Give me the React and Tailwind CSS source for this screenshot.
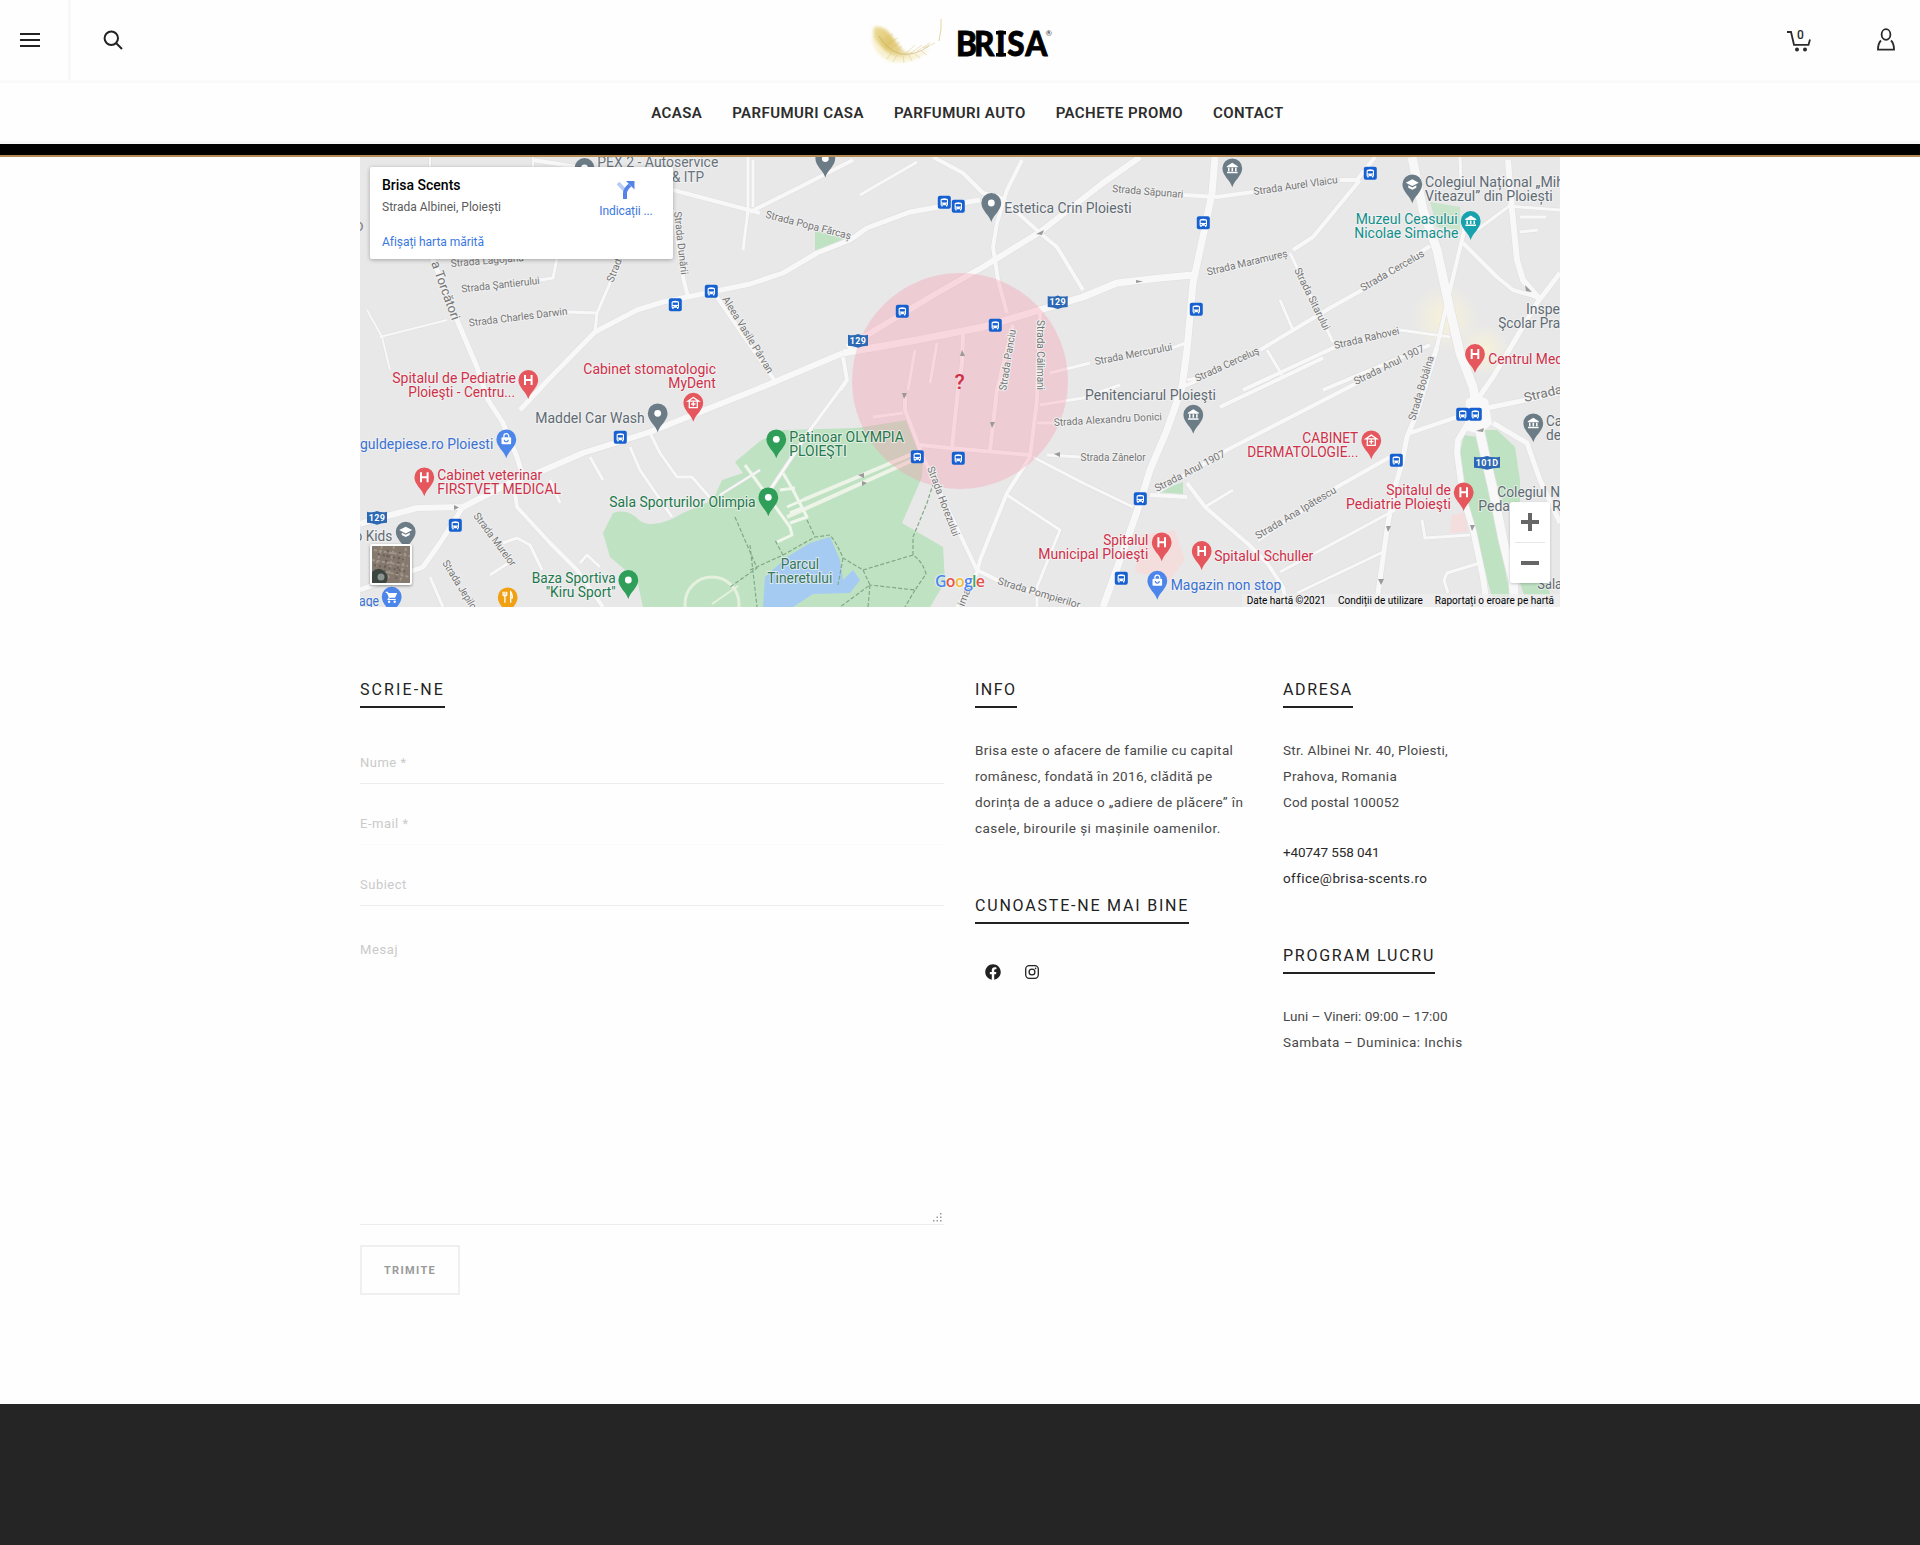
import React from "react";
import { FaFacebook } from "react-icons/fa";

/* ---------- Map data ---------- */

const roads = [
  // [width, path]
  [2, "M367 310L382 337L390 370M380 337L447 320M430 157V170M533 157V170M760 470L720 495"],
  [3, "M557 258L553 278L527 282M617 267L597 313L595 332M597 313L567 312M748 157V210L743 250M860 195L917 162M753 160V207M590 457L603 480M550 480L560 503M650 433L660 453L677 477H692L712 500M630 447L640 470L672 517M503 543L517 538L530 545L542 570M580 563L587 555L600 567M430 577L443 607M490 575L510 562M847 380L810 430L770 490"],
  [3, "M937 343L930 383M915 350L908 390M873 417L903 413M1040 405L1083 398L1120 385M1037 423H1053M1047 455L1080 457M1007 495L1060 530L1037 587V607M1033 457L1083 483L1133 507M1050 373L1090 363M1172 348L1186 343"],
  [3, "M1280 300L1293 330M1267 350L1282 375M1508 206L1560 210M1520 217H1546M1520 232L1538 230M1460 157L1461 183M1477 230L1508 207M1187 380L1196 378M1205 507L1233 490M1280 572L1395 510M1297 593L1383 552M1422 520L1425 538L1470 535M1480 563L1447 573L1444 580L1448 593M1290 253L1333 342M1400 330L1450 337"],
  [4, "M533 160L577 167M673 190L760 213M673 210L683 277L688 297M843 357L847 380L840 390M750 212L800 187L853 160M933 157L963 173L983 193L1000 197M1022 160L1007 190L997 223L993 247L998 280L1007 313M1000 197L1040 233L1057 247L1083 290M717 297L777 384M513 480L517 507L550 543L577 570L603 607"],
  [4, "M963 333L962 363L958 390L952 447M997 390L990 450M1013 325L997 390M1040 313L1037 400L1030 457M905 397V410L923 457M920 445L950 448L1030 455M1030 457L1007 493L980 560L977 573M923 457L977 570L997 580L1080 607M977 573L957 607"],
  [4, "M1183 195L1217 197L1253 192M1340 180L1357 180L1375 157M1360 180L1313 237L1293 250M1260 350L1330 308L1362 290L1430 246M1182 387L1196 381M1243 390L1333 348L1400 330M1323 390L1430 345M1220 407L1277 380L1323 358M1157 492L1227 450L1357 383L1372 376M1258 540L1337 487L1390 457M1410 433L1457 417M1187 483L1205 507L1247 543L1267 563L1283 587L1287 607M1150 495L1187 497M1463 243L1497 277L1513 290L1537 297M1465 227L1450 290L1437 347"],
  [5, "M425 240L457 320L477 367L488 400L503 423L517 457L523 477M463 507L440 543L423 567L360 590M548 380L595 332L637 310L663 302L697 295L750 284L783 273L817 253L850 240L867 228L910 212L950 205L980 200M520 410L548 380M1437 347L1417 413L1407 437L1402 463L1395 487L1388 523L1378 593V607M1560 273L1537 303L1493 377L1477 400M1493 423L1527 443L1540 480L1560 523M1477 410L1560 393"],
  [6, "M360 524L383 517L417 508L463 507L510 483L537 473L583 453L650 432L710 408L760 388L843 353M847 347L937 293L983 267L1040 232L1103 183L1140 157M1508 160L1512 210L1517 260L1523 280L1540 300M1470 420L1458 440L1457 453L1463 497L1473 530L1483 577L1487 607"],
  [7, "M843 353L917 340L983 327L1083 297L1117 283L1160 278L1193 275M1215 157L1212 193L1205 227L1193 283L1187 350L1182 387L1167 430L1150 470L1140 503L1120 560L1103 607"],
  [9, "M1412 157L1423 210L1437 250L1450 310L1460 353L1473 387L1477 410L1480 433L1493 490L1503 540L1513 580L1515 607"],
];

const streets = [
  [451, 267, 524, 261, "Strada Lagojana"],
  [461.7, 292.5, 540, 284, "Strada Şantierului"],
  [469.3, 326.5, 567.7, 314.5, "Strada Charles Darwin"],
  [674, 212, 681, 275, "Strada Dunării"],
  [613, 283, 624, 255, "Strada"],
  [722, 299, 768, 374, "Aleea Vasile Pârvan"],
  [765, 217.5, 850, 239.5, "Strada Popa Fărcaș"],
  [1112, 192, 1183, 198, "Strada Săpunari"],
  [1254, 195, 1338, 183, "Strada Aurel Vlaicu"],
  [1207.7, 275.5, 1288, 256.5, "Strada Maramureș"],
  [1294, 270, 1324, 331, "Strada Sitarului"],
  [1363, 291.5, 1425, 255.5, "Strada Cercelus"],
  [1197, 382, 1260, 353, "Strada Cerceluş"],
  [1335, 349, 1400, 334, "Strada Rahovei"],
  [1356, 385, 1425, 351, "Strada Anul 1907"],
  [1415, 421, 1434, 357, "Strada Bobâlna"],
  [1095.5, 365, 1172.7, 350, "Strada Mercurului"],
  [1006, 391, 1016, 330, "Strada Panciu"],
  [1037, 320, 1037, 390, "Strada Călimani"],
  [1054, 426, 1162, 420, "Strada Alexandru Donici"],
  [1080.5, 461, 1145.7, 461, "Strada Zânelor"],
  [927, 468, 953, 537, "Strada Horezului"],
  [997, 584, 1079, 608.5, "Strada Pompierilor"],
  [964, 607, 973, 585, "imac"],
  [1157, 492, 1226, 456, "Strada Anul 1907"],
  [1258, 539.5, 1337, 492, "Strada Ana Ipătescu"],
  [473, 516, 511, 567, "Strada Murelor"],
  [442, 563, 473, 613, "Strada Jepilor"],
];

const places = [
  // [x1, x2, baseline, text, colour]
  [597.3, 718.3, 167, "PEX 2 - Autoservice", "#69747c"],
  [672, 704, 181.5, "& ITP", "#69747c"],
  [1004.3, 1131.7, 213, "Estetica Crin Ploiesti", "#5f6b73"],
  [1425, 1564, 187, "Colegiul Național „Mih", "#5f6b73"],
  [1425, 1552.7, 201, "Viteazul” din Ploiești", "#5f6b73"],
  [1355.7, 1457.7, 224, "Muzeul Ceasului", "#12908c"],
  [1354.3, 1458.3, 238, "Nicolae Simache", "#12908c"],
  [1526, 1560, 314, "Inspe", "#5f6b73"],
  [1498.3, 1560, 328, "Şcolar Pra", "#5f6b73"],
  [1488.3, 1563, 364, "Centrul Med", "#cf3049"],
  [1085, 1216, 400, "Penitenciarul Ploieşti", "#5f6b73"],
  [583.3, 716, 374, "Cabinet stomatologic", "#cf3049"],
  [668.3, 715.7, 388, "MyDent", "#cf3049"],
  [392.3, 516, 383.3, "Spitalul de Pediatrie", "#cf3049"],
  [408.3, 515, 397.3, "Ploieşti - Centru...", "#cf3049"],
  [535.3, 644.7, 423.3, "Maddel Car Wash", "#5f6b73"],
  [360, 493.3, 449, "guldepiese.ro Ploiesti", "#3a72d4"],
  [437.3, 542.3, 480.3, "Cabinet veterinar", "#cf3049"],
  [437.3, 561, 494, "FIRSTVET MEDICAL", "#cf3049"],
  [609.3, 755.7, 507.3, "Sala Sporturilor Olimpia", "#23794c"],
  [354.5, 392.3, 541, "o Kids", "#5f6b73"],
  [359, 379, 606, "age", "#3a72d4"],
  [531.7, 615.7, 583, "Baza Sportiva", "#23794c"],
  [545.7, 615.7, 597, "\"Kiru Sport\"", "#23794c"],
  [789.3, 904, 442, "Patinoar OLYMPIA", "#23794c"],
  [789.3, 846.7, 456, "PLOIEŞTI", "#23794c"],
  [780.7, 819, 569, "Parcul", "#35775a"],
  [767.3, 832.3, 583, "Tineretului", "#35775a"],
  [1103.3, 1148.3, 545.3, "Spitalul", "#cf3049"],
  [1038.3, 1148.3, 559.3, "Municipal Ploieşti", "#cf3049"],
  [1214.3, 1313.3, 561, "Spitalul Schuller", "#cf3049"],
  [1170.7, 1281.3, 589.7, "Magazin non stop", "#3a72d4"],
  [1302.3, 1358.3, 443, "CABINET", "#cf3049"],
  [1247.3, 1358.3, 457, "DERMATOLOGIE...", "#cf3049"],
  [1386.3, 1451, 495, "Spitalul de", "#cf3049"],
  [1346, 1451, 509, "Pediatrie Ploieşti", "#cf3049"],
  [1497.3, 1560, 497, "Colegiul N", "#5f6b73"],
  [1478.3, 1510, 511, "Peda", "#5f6b73"],
  [1552, 1561, 511, "R", "#5f6b73"],
  [1546, 1562, 426.3, "Ca", "#5f6b73"],
  [1546, 1561, 440.3, "de", "#5f6b73"],
  [1537.3, 1562, 589, "Sala", "#5f6b73"],
];

const GRAY = "#6c7c87";
const RED = "#e5575c";
const BLUE = "#4d86ea";
const GREEN = "#2f9e58";

const pins = [
  [584.5, 168, GRAY, "dot"],
  [825.3, 158.5, GRAY, "dot"],
  [991.3, 203, GRAY, "dot"],
  [1232.3, 168.3, GRAY, "civic"],
  [1412.3, 184.3, GRAY, "school"],
  [1470.7, 221, "#17a2ae", "civic"],
  [1475, 354, RED, "h"],
  [528.3, 380, RED, "h"],
  [693.3, 402.7, RED, "clinic"],
  [657.7, 413.3, GRAY, "dot"],
  [506.3, 439.3, BLUE, "bag"],
  [424.3, 477.3, RED, "h"],
  [405.7, 531.7, GRAY, "school"],
  [391.7, 596.7, BLUE, "cart"],
  [507.7, 597.3, "#f0a013", "food"],
  [628.3, 580, GREEN, "dot"],
  [776.3, 439.3, GREEN, "dot"],
  [768.3, 497.3, GREEN, "dot"],
  [1161.7, 542.3, RED, "h"],
  [1201.7, 551, RED, "h"],
  [1157.3, 580.7, BLUE, "bag"],
  [1193.3, 414.7, GRAY, "civic"],
  [1371.3, 440.3, RED, "clinic"],
  [1463.7, 492.3, RED, "h"],
  [1533.3, 423.3, GRAY, "civic"],
];

const stops = [
  [675.3, 304.7], [711.3, 291.3], [944.3, 202.3], [958.3, 206.3], [902.3, 311.3],
  [995.3, 325.3], [1370.3, 173.3], [1203.3, 222.7], [1196.3, 309.3], [620.3, 437.3],
  [455.3, 525.3], [917.3, 456.7], [958.3, 458.3], [1140.3, 498.7], [1121.3, 578.3],
  [1462.7, 414.3], [1475.3, 414.3], [1396.3, 460.3],
];

const shields = [
  [1057.7, 302, 20, "129"],
  [858, 340.7, 20, "129"],
  [377, 517.7, 20, "129"],
  [1487, 462.7, 26, "101D"],
];

/* ---------- Map pieces ---------- */

function PinGlyph({ kind }) {
  switch (kind) {
    case "h":
      return <path d="M-3.3 -5V5M3.3 -5V5M-3.3 0H3.3" stroke="#fff" strokeWidth="2" fill="none" />;
    case "civic":
      return (
        <g fill="#fff">
          <path d="M-5.5 -2L0 -5.5L5.5 -2V-1H-5.5Z" />
          <path d="M-4.3 -0.5H-2.8V3H-4.3ZM-0.8 -0.5H0.8V3H-0.8ZM2.8 -0.5H4.3V3H2.8ZM-5.3 3.5H5.3V5H-5.3Z" />
        </g>
      );
    case "school":
      return <path d="M0 -5L6.5 -1.6L0 1.8L-6.5 -1.6ZM-4 1V3.4L0 5.4L4 3.4V1L0 3.1Z" fill="#fff" />;
    case "clinic":
      return (
        <g fill="none" stroke="#fff" strokeWidth="1.3">
          <path d="M-4 -1.5V5H4V-1.5M-5.5 -1.5L0 -5.2L5.5 -1.5Z" />
          <path d="M0 -1V3.6M-2.2 1.3H2.2" />
        </g>
      );
    case "bag":
      return (
        <g>
          <rect x="-4.8" y="-2" width="9.6" height="7" rx="1" fill="#fff" />
          <path d="M-2.4 -2V-3.2A2.4 2.4 0 0 1 2.4 -3.2V-2" fill="none" stroke="#fff" strokeWidth="1.3" />
          <path d="M-2 0.4A2 2 0 0 0 2 0.4" fill="none" stroke="#4d86ea" strokeWidth="1.1" />
        </g>
      );
    case "cart":
      return (
        <g fill="#fff">
          <path d="M-6 -5H-3.8L-3.2 -3.6H5.5L3.4 1H-2L-2.6 2.2H4V3.4H-4.4L-3 0.6L-4.8 -3.8H-6Z" />
          <circle cx="-2.6" cy="5" r="1.2" />
          <circle cx="3" cy="5" r="1.2" />
        </g>
      );
    case "food":
      return (
        <path
          d="M-4.6 -5.5V-1.6M-2.8 -5.5V-1.6M-1 -5.5V-1.6M-4.6 -1.6H-1M-2.8 -1.6V5.5M3 5.5V-5.5Q5 -3.6 4.6 0.6H3"
          fill="none"
          stroke="#fff"
          strokeWidth="1.3"
        />
      );
    default:
      return <circle r="3.4" fill="#fff" />;
  }
}

function Pin({ x, y, color, kind }) {
  return (
    <g transform={`translate(${x} ${y})`}>
      <path d="M0 19C-1.6 12.5 -9.9 7.5 -9.9 0A9.9 9.9 0 1 1 9.9 0C9.9 7.5 1.6 12.5 0 19Z" fill={color} />
      <PinGlyph kind={kind} />
    </g>
  );
}

function Stop({ x, y }) {
  return (
    <g transform={`translate(${x} ${y})`}>
      <rect x="-6.5" y="-6.5" width="13" height="13" rx="2" fill="#1660d0" />
      <path d="M-3.7 3V-2.4Q-3.7 -4 0 -4T3.7 -2.4V3H3V4.2H1.7V3H-1.7V4.2H-3V3Z" fill="#fff" />
      <rect x="-2.6" y="-2.2" width="5.2" height="2.4" fill="#1660d0" />
      <rect x="-2.7" y="1.3" width="1.2" height="0.9" fill="#1660d0" />
      <rect x="1.5" y="1.3" width="1.2" height="0.9" fill="#1660d0" />
    </g>
  );
}

function Street({ x1, y1, x2, y2, text, size = 10.5 }) {
  const length = Math.hypot(x2 - x1, y2 - y1);
  const angle = (Math.atan2(y2 - y1, x2 - x1) * 180) / Math.PI;
  return (
    <text
      transform={`translate(${x1} ${y1}) rotate(${angle})`}
      textLength={length}
      lengthAdjust="spacingAndGlyphs"
      fontSize={size}
      fill="#757575"
      stroke="#f1f1f1"
      strokeWidth="2"
      paintOrder="stroke"
    >
      {text}
    </text>
  );
}

function MapCanvas() {
  return (
    <svg viewBox="360 157 1200 450" className="block h-[450px] w-[1200px]" fontFamily="Roboto, sans-serif">
      <defs>
        <radialGradient id="glow">
          <stop offset="0" stopColor="#f8f2d8" />
          <stop offset="1" stopColor="#f8f2d8" stopOpacity="0" />
        </radialGradient>
      </defs>
      <rect x="360" y="157" width="1200" height="450" fill="#e8e8e9" />

      <circle cx="1445" cy="318" r="34" fill="url(#glow)" />
      <circle cx="1484" cy="350" r="26" fill="url(#glow)" />
      <path d="M1140 535L1175 530L1185 560L1170 580L1135 572Z" fill="#f3dedd" />
      <path d="M1452 515L1465 512L1468 532L1450 533Z" fill="#f3dedd" />

      <g fill="#bfe2c3">
        <path d="M735 462L760 441L783 430L857 428L907 420L923 457L922 477L902 523L943 547L945 582L930 607H643L637 580L610 557L603 533L613 513Q628 508 640 521Q655 530 683 513L713 500L722 480L743 473Z" />
        <path d="M815 230L847 240L815 253Z" />
        <path d="M1430 202L1460 207V230L1437 227Z" opacity=".8" />
        <path d="M1157 492L1183 482V494Z" />
        <path d="M1464 435L1477 437L1490 490L1507 580L1512 597H1492L1480 553L1467 497L1460 453Z" />
        <path d="M1485 430L1497 430L1515 447L1520 480V504H1503L1493 470Z" />
        <path d="M1520 583L1548 583L1550 595H1524Z" />
      </g>
      <path
        d="M830 537L810 543L787 557L765 577L763 607H793L813 594L850 593L860 580L853 570L843 580L840 560Z"
        fill="#a5cbf3"
      />

      <g fill="none" strokeLinejoin="round" strokeLinecap="butt">
        {roads.map(([w, d], i) => (
          <path key={`c${i}`} d={d} stroke="#e0e0e1" strokeWidth={w + 1.2} />
        ))}
        {roads.map(([w, d], i) => (
          <path key={i} d={d} stroke="#f8f8f8" strokeWidth={w} />
        ))}
        <path d="M1466 400Q1477 392 1488 400L1492 424L1480 434L1465 430Z" fill="#f8f8f8" stroke="none" />
        <path d="M803 500L917 452M787 517L913 460" stroke="#edf3e6" strokeWidth="4" />
        <path
          d="M745 465L790 527L792 535L777 542M783 473L793 490L807 517L790 523M780 490L795 488M787 507L803 500M790 513L802 508"
          stroke="#f0f6ec"
          strokeWidth="3"
        />
        <circle cx="712" cy="604" r="27" stroke="#e5f0dd" strokeWidth="3" />
        <path d="M712 604L738 586" stroke="#e5f0dd" strokeWidth="2" />
        <path
          d="M807 520L815 537L830 535Q838 545 843 558L863 570L870 585L840 607M863 570L913 555Q923 562 926 574L915 590L870 585M913 555V537L927 503L935 478M750 570L783 555L815 537M783 555L775 540M735 517L757 568L730 587M750 545L757 607M843 558L838 585M870 585L868 607M915 590L905 607"
          stroke="#82a886"
          strokeWidth="1.2"
          strokeDasharray="4 2"
        />
      </g>

      <circle cx="960" cy="381" r="108" fill="#fa96aa" opacity=".33" />

      <g fill="#9a9a9a">
        <path d="M1036 234L1044 230L1042 235Z" />
        <path d="M1136 280L1143 281.5L1136 283Z" />
        <path d="M962 350L965 356H960Z" />
        <path d="M904 399L902 393H907Z" />
        <path d="M992 428L990 422H995Z" />
        <path d="M1054 454L1060 452V457Z" />
        <path d="M454 505V510L459 507.5Z" />
        <path d="M1388 532L1386 526H1391Z" />
        <path d="M1381 585L1378 579H1384Z" />
        <path d="M1472 531L1470 525H1475Z" />
        <path d="M858 475L864 473V478Z" />
        <path d="M867 483L862 481V486Z" />
        <path d="M1525 285L1532 292L1526 291Z" />
        <path d="M1476 431L1484 428L1483 432Z" />
      </g>

      {streets.map(([x1, y1, x2, y2, t], i) => (
        <Street key={i} x1={x1} y1={y1} x2={x2} y2={y2} text={t} />
      ))}
      <Street x1={431} y1={263} x2={452} y2={321} text="a Torcători" size={13} />
      <Street x1={1525} y1={402} x2={1563} y2={393} text="Strada" size={12.5} />
      <text x="355" y="231" fontSize="13" fill="#757575">D</text>

      {shields.map(([x, y, w, t], i) => (
        <g key={i} transform={`translate(${x} ${y})`}>
          <path
            d={`M${-w / 2} -6Q${-w / 4} -4.6 0 -6.6Q${w / 4} -4.6 ${w / 2} -6V5Q${w / 4} 5 0 7Q${-w / 4} 5 ${-w / 2} 5Z`}
            fill="#2c68b4"
          />
          <text y="3.2" fontSize="9" fontWeight="700" fill="#fff" textAnchor="middle" letterSpacing=".3">{t}</text>
        </g>
      ))}
      {stops.map(([x, y], i) => (
        <Stop key={i} x={x} y={y} />
      ))}
      {pins.map(([x, y, c, k], i) => (
        <Pin key={i} x={x} y={y} color={c} kind={k} />
      ))}
      {places.map(([x1, x2, y, t, c], i) => (
        <text
          key={i}
          x={x1}
          y={y}
          textLength={x2 - x1}
          lengthAdjust="spacingAndGlyphs"
          fontSize="14"
          fill={c}
          stroke="#f4f4f4"
          strokeOpacity=".7"
          strokeWidth="2"
          paintOrder="stroke"
        >
          {t}
        </text>
      ))}
      <text x="959.5" y="389" fontSize="21" fontWeight="500" fill="#cf2f45" textAnchor="middle">?</text>
    </svg>
  );
}

function GoogleMark() {
  return (
    <div className="absolute top-[416px] left-[575px] font-['Open_Sans',sans-serif] text-[16px] leading-[16px] font-semibold tracking-[-0.75px] [text-shadow:0_0_2px_#fff,0_0_2px_#fff]">
      <span className="text-[#4a86ee]">G</span>
      <span className="text-[#e3524a]">o</span>
      <span className="text-[#efbd34]">o</span>
      <span className="text-[#4a86ee]">g</span>
      <span className="text-[#3ba757]">l</span>
      <span className="text-[#e3524a]">e</span>
    </div>
  );
}

function MapPanel() {
  return (
    <section className="relative h-[450px] w-[1200px] overflow-hidden font-[Roboto,sans-serif]">
      <MapCanvas />
      <div className="absolute top-[10px] left-[10px] flex h-[92px] w-[303px] justify-between rounded-[2px] bg-white pr-[20px] pl-[12px] shadow-[0_1px_4px_rgba(0,0,0,0.3)]">
        <div className="flex flex-col">
          <div className="mt-[10px] text-[14px] leading-[16px] font-medium text-black">Brisa Scents</div>
          <div className="mt-[6px] text-[12px] leading-[16px] text-[#5b5b5b]">Strada Albinei, Ploiești</div>
          <div className="mt-[19px] text-[12px] leading-[16px] tracking-[-0.05px] text-[#3a78e0]">Afișați harta mărită</div>
        </div>
        <div className="flex w-[54px] flex-col items-center">
          <svg viewBox="0 0 20 20" className="mt-[13px] h-5 w-5">
            <path d="M2 3L9.5 11" stroke="#b9cdf4" strokeWidth="4" />
            <path d="M9 19V13Q9 9.500 14 5" fill="none" stroke="#5584e8" strokeWidth="4" />
            <path d="M10 1H18.500V9.500Z" fill="#5584e8" />
          </svg>
          <div className="mt-[3px] text-[12px] leading-[16px] tracking-[-0.1px] whitespace-nowrap text-[#3a78e0]">Indicații ...</div>
        </div>
      </div>
      <div className="absolute top-[387px] left-[10px] h-[41px] w-[42px] rounded-[2px] border-2 border-white bg-[#85796d] shadow-[0_1px_3px_rgba(0,0,0,0.4)]">
        <svg viewBox="0 0 38 37" className="block h-full w-full">
          <path d="M2 4L38 10M0 14L36 20M4 24L38 31M10 0L4 20M22 0L16 34M34 2L28 37" stroke="#a1968a" strokeWidth="2" strokeDasharray="3 2" />
          <path d="M6 8L34 14M2 19L36 26M16 4L12 28M28 6L24 34" stroke="#6a6058" strokeWidth="2" strokeDasharray="2 3" />
          <path d="M0 37V26Q6 20 12 25Q18 30 14 37Z" fill="#3c4540" />
          <circle cx="9" cy="31" r="3.500" fill="#8b9490" />
        </svg>
      </div>
      <GoogleMark />
      <div className="absolute right-0 bottom-0 flex h-[13px] items-center gap-[12px] bg-[#f0f0f0]/70 pr-[6px] pl-[5px] text-[10px] leading-[13px] whitespace-nowrap text-black">
        <span>Date hartă ©2021</span>
        <span>Condiții de utilizare</span>
        <span>Raportați o eroare pe hartă</span>
      </div>
      <div className="absolute top-[345px] right-[10px] flex h-[81px] w-[40px] flex-col items-center rounded-[2px] bg-white shadow-[0_1px_3px_rgba(0,0,0,0.2)]">
        <div className="flex h-10 w-full items-center justify-center">
          <svg viewBox="0 0 18 18" className="h-[18px] w-[18px]">
            <path d="M9 0V18M0 9H18" stroke="#666" strokeWidth="4" />
          </svg>
        </div>
        <div className="h-px w-[30px] bg-[#e6e6e6]" />
        <div className="flex h-10 w-full items-center justify-center">
          <div className="h-1 w-[18px] bg-[#666]" />
        </div>
      </div>
    </section>
  );
}

/* ---------- Header ---------- */

function Logo() {
  return (
    <svg viewBox="0 0 190 60" className="h-[60px] w-[190px]" aria-label="Brisa">
      <defs>
        <linearGradient id="plume" x1="0" y1="0" x2="1" y2="0.6">
          <stop offset="0" stopColor="#eadb98" />
          <stop offset="0.5" stopColor="#dcc05c" />
          <stop offset="1" stopColor="#eddfae" />
        </linearGradient>
        <filter id="soft" x="-20%" y="-20%" width="140%" height="140%">
          <feGaussianBlur stdDeviation="1.5" />
        </filter>
      </defs>
      <path d="M9 17Q4 29 12 40Q22 52 36 50Q52 50 66 36Q52 44 40 42Q31 36 24 22Q17 13 9 17Z" fill="#f8f1d2" filter="url(#soft)" />
      <path d="M9 15Q7 25 15 33Q24 44 36 45Q44 44 54 38Q48 41 40 40Q34 34 27 24Q19 13 9 15Z" fill="url(#plume)" opacity=".85" filter="url(#soft)" />
      <path d="M14 24Q22 38 36 42Q50 44 64 34" fill="none" stroke="#bfa55c" strokeWidth=".8" opacity=".7" />
      <g fill="none" stroke="#d5bd76" strokeWidth=".6" opacity=".7">
        <path d="M16 29L28 22M20 33L33 26M25 37L35 30M30 40L37 34M40 42L50 33M46 41L57 33M52 39L65 31M58 36L70 31M26 41L22 47M32 43L28 50M38 44L39 51M44 43L47 49M50 42L55 46M56 39L62 43" />
      </g>
      <path d="M74 29Q77 16 76 7" fill="none" stroke="#e3d6a6" strokeWidth="1" />
      <text
        x="101 121.100 145.500 158 178"
        y="44.300"
        transform="scale(.9 1)"
        fontFamily="Lato, sans-serif"
        fontWeight="900"
        fontSize="35"
        fill="#000"
        stroke="#000"
        strokeWidth=".8"
      >
        BRISA
      </text>
      <path d="M131 20.800H141M131 42.700H141" stroke="#000" strokeWidth="3.600" />
      <text x="180.500" y="24" fontFamily="Lato, sans-serif" fontSize="8" fill="#333">®</text>
    </svg>
  );
}

function CartIcon() {
  return (
    <svg viewBox="0 0 26 26" className="mt-px h-[26px] w-[26px]" fill="none" stroke="#2b2b2b" strokeWidth="1.800">
      <path d="M2 4H6L9 16.800H23.500L25 11.500" />
      <circle cx="12" cy="21.500" r="2" fill="#2b2b2b" stroke="none" />
      <circle cx="20" cy="21.500" r="2" fill="#2b2b2b" stroke="none" />
      <text x="15.500" y="10.600" fontSize="12" fontWeight="500" fontFamily="Roboto, sans-serif" fill="#2b2b2b" stroke="none" textAnchor="middle">0</text>
    </svg>
  );
}

function Header() {
  const links = ["ACASA", "PARFUMURI CASA", "PARFUMURI AUTO", "PACHETE PROMO", "CONTACT"];
  return (
    <header>
      <div className="grid h-[83px] grid-cols-[1fr_190px_1fr] items-stretch border-b-[3px] border-[#fafafa]">
        <div className="flex">
          <div className="flex w-[71px] items-center border-r-[3px] border-[#f8f8f8] pl-5">
            <div className="flex flex-col gap-1">
              <span className="h-0.5 w-5 bg-[#222]" />
              <span className="h-0.5 w-5 bg-[#222]" />
              <span className="h-0.5 w-5 bg-[#222]" />
            </div>
          </div>
          <div className="flex items-center pl-[32px]">
            <svg viewBox="0 0 20 20" className="h-5 w-5" fill="none" stroke="#222" strokeWidth="2">
              <circle cx="8.300" cy="8.300" r="6.700" />
              <path d="M13 13L19 19" />
            </svg>
          </div>
        </div>
        <div className="flex items-start pt-[12px]">
          <Logo />
        </div>
        <div className="flex items-center justify-end gap-[65px] pr-[24px]">
          <CartIcon />
          <svg viewBox="0 0 20 24" className="h-[24px] w-[20px]" fill="none" stroke="#2b2b2b" strokeWidth="1.800">
            <ellipse cx="10" cy="6.500" rx="4.400" ry="5.300" />
            <path d="M5 12.500Q2 15.500 2 21.700H18Q18 15.500 15 12.500" />
          </svg>
        </div>
      </div>
      <nav className="flex h-[61px] items-center justify-center gap-[30px] border-b-[3px] border-[#f7f7f7] pt-[2px] pl-[15px] font-[Roboto,sans-serif] text-[15px] font-semibold text-[#2c2c2c]">
        {links.map((l) => (
          <a key={l} className="tracking-[0.43px]">
            {l}
          </a>
        ))}
      </nav>
      <div className="h-[11px] bg-black" />
      <div className="h-[2px] bg-[#b48a55]" />
    </header>
  );
}

/* ---------- Content ---------- */

function Heading({ children, className = "" }) {
  return (
    <h2 className={`w-fit border-b-2 border-[#222] pb-[4px] text-[16px] leading-[24px] whitespace-nowrap text-[#222] ${className}`}>
      {children}
    </h2>
  );
}

function Field({ placeholder }) {
  return (
    <input
      placeholder={placeholder}
      className="block h-[42px] w-full border-b border-[#ececec] bg-transparent text-[13px] tracking-[0.5px] outline-none placeholder:text-[#cacaca]"
    />
  );
}

function ContactForm() {
  return (
    <div>
      <Heading className="tracking-[2.1px]">SCRIE-NE</Heading>
      <form className="mt-[34px] flex flex-col gap-[19px]">
        <Field placeholder="Nume *" />
        <input
          placeholder="E-mail *"
          className="block h-[42px] w-full border-b border-[#fafafa] bg-transparent text-[13px] tracking-[0.5px] outline-none placeholder:text-[#cacaca]"
        />
        <Field placeholder="Subiect" />
        <div className="relative h-[300px]">
          <textarea
            placeholder="Mesaj"
            className="block h-full w-full resize-none border-b border-[#ececec] bg-transparent pt-[15px] text-[13px] leading-[20px] tracking-[0.6px] outline-none placeholder:text-[#cacaca]"
          />
          <svg viewBox="0 0 9 9" className="absolute right-[2px] bottom-[3px] h-[9px] w-[9px]" fill="#999">
            <path d="M7 0H8.500V1.500H7ZM7 3.500H8.500V5H7ZM7 7H8.500V8.500H7ZM3.500 3.500H5V5H3.500ZM3.500 7H5V8.500H3.500ZM0 7H1.500V8.500H0Z" />
          </svg>
        </div>
        <button
          type="button"
          className="mt-px flex h-[50px] w-[100px] items-center justify-center border-2 border-[#f0f0f0] pt-[2px] text-[11px] font-bold tracking-[1.35px] text-[#9a9a9a]"
        >
          TRIMITE
        </button>
      </form>
    </div>
  );
}

export default function App() {
  return (
    <div className="flex min-h-[1545px] w-full flex-col bg-[#fefefe] font-[Roboto,sans-serif]">
      <Header />
      <main className="mx-auto w-[1200px]">
        <MapPanel />
        <div className="grid grid-cols-[584px_277px_277px] gap-x-[31px] pt-[71px] text-[13.5px] leading-[26px] text-[#484848]">
          <ContactForm />
          <div>
            <Heading className="tracking-[1.5px]">INFO</Heading>
            <div className="mt-[29px] whitespace-nowrap">
              <p className="tracking-[0.36px]">Brisa este o afacere de familie cu capital</p>
              <p className="tracking-[0.34px]">românesc, fondată în 2016, clădită pe</p>
              <p className="tracking-[0.39px]">dorința de a aduce o „adiere de plăcere” în</p>
              <p className="tracking-[0.45px]">casele, birourile și mașinile oamenilor.</p>
            </div>
            <Heading className="mt-[53px] tracking-[1.8px]">CUNOASTE-NE MAI BINE</Heading>
            <div className="mt-[40px] flex items-center gap-[24px] pl-[10px] text-[#222]">
              <FaFacebook size={16} />
              <svg viewBox="0 0 14 14" className="h-[14px] w-[14px]" fill="none" stroke="currentColor" strokeWidth="1.300">
                <rect x=".7" y=".7" width="12.600" height="12.600" rx="3.500" />
                <circle cx="7" cy="7" r="2.900" />
                <circle cx="10.600" cy="3.400" r=".8" fill="currentColor" stroke="none" />
              </svg>
            </div>
          </div>
          <div>
            <Heading className="tracking-[1.65px]">ADRESA</Heading>
            <div className="mt-[29px]">
              <p className="tracking-[0.3px]">Str. Albinei Nr. 40, Ploiesti,</p>
              <p className="tracking-[0.37px]">Prahova, Romania</p>
              <p className="tracking-[0.15px]">Cod postal 100052</p>
            </div>
            <div className="mt-[24px] text-[#2a2a2a]">
              <p className="tracking-[-0.1px]">+40747 558 041</p>
              <p className="tracking-[0.38px]">office@brisa-scents.ro</p>
            </div>
            <Heading className="mt-[53px] tracking-[1.75px]">PROGRAM LUCRU</Heading>
            <div className="mt-[29px]">
              <p>Luni – Vineri: 09:00 – 17:00</p>
              <p className="tracking-[0.43px]">Sambata – Duminica: Inchis</p>
            </div>
          </div>
        </div>
      </main>
      <footer className="mt-[109px] h-[141px] bg-[#252525]" />
    </div>
  );
}
